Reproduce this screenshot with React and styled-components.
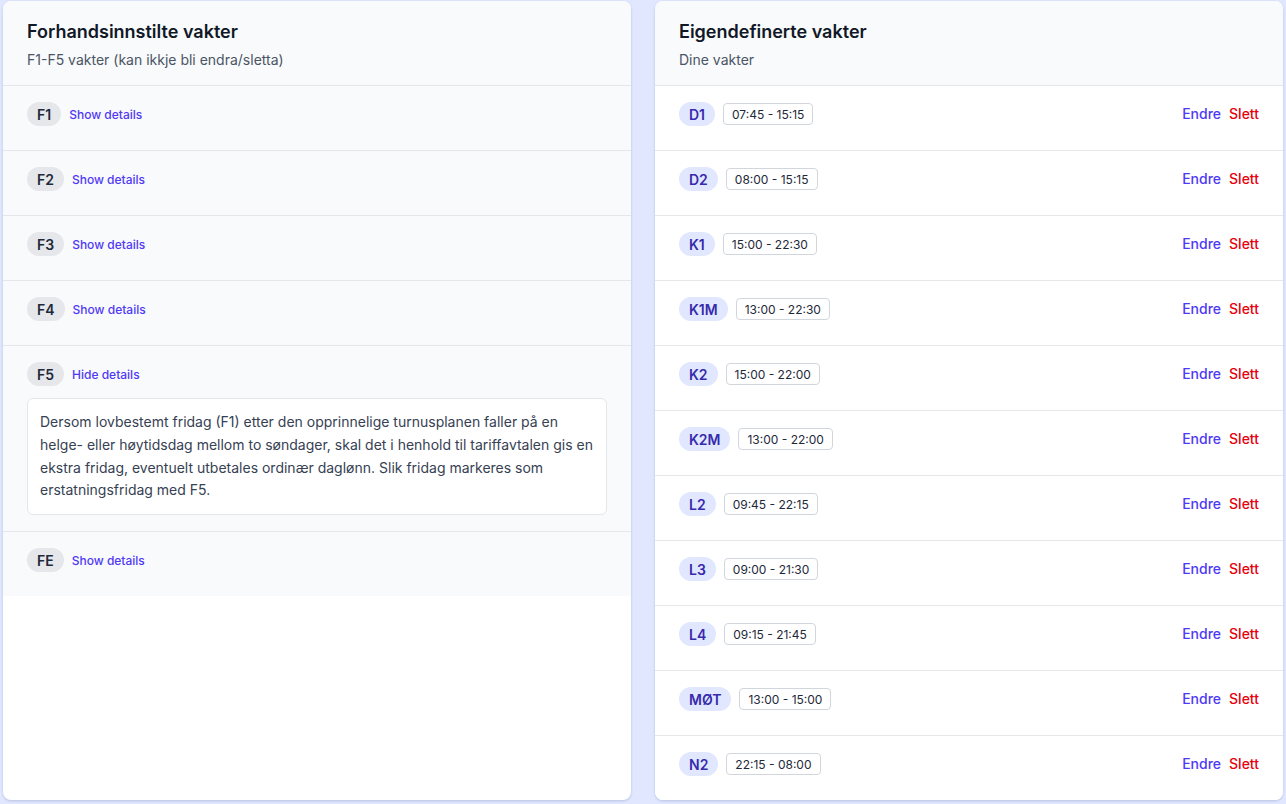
import React, { useState } from "react";
import styled, { createGlobalStyle } from "styled-components";

const Global = createGlobalStyle`
  html, body { margin: 0; padding: 0; background: #e0e7ff; }
  body { font-family: Inter, "Noto Sans", sans-serif; color: #111827; -webkit-font-smoothing: antialiased; }
  * { box-sizing: border-box; }
`;

const Page = styled.div`
  display: grid;
  grid-template-columns: 1fr 1fr;
  gap: 24px;
  padding: 1px 3px 4px;
  min-height: 804px;
  align-items: stretch;
`;

const Card = styled.section`
  background: #ffffff;
  border-radius: 8px;
  box-shadow: 0 1px 3px rgba(30, 41, 99, 0.12), 0 1px 2px rgba(30, 41, 99, 0.08);
  overflow: hidden;
  display: flex;
  flex-direction: column;
  height: 799px;
`;

const Header = styled.header`
  background: #f9fafb;
  padding: 17px 24px 15px;
  border-bottom: 1px solid #e5e7eb;
`;

const Title = styled.h2`
  margin: 0;
  font-size: 18px;
  line-height: 28px;
  font-weight: 600;
  color: #101828;
`;

const Subtitle = styled.p`
  margin: 4px 0 0;
  font-size: 14px;
  line-height: 20px;
  color: #4a5565;
`;

const List = styled.ul`
  list-style: none;
  margin: 0;
  padding: 0;
`;

const Row = styled.li`
  background: ${(p) => (p.$muted ? "#f9fafb" : "#ffffff")};
  padding: 16px 24px ${(p) => (p.$open ? "16px" : "24px")};
  border-bottom: 1px solid #e5e7eb;
  &:last-child { border-bottom: none; }
`;

const RowHead = styled.div`
  display: flex;
  align-items: center;
  justify-content: space-between;
  height: 24px;
`;

const Left = styled.div`
  display: flex;
  align-items: center;
  gap: 8px;
`;

const Badge = styled.span`
  display: inline-flex;
  align-items: center;
  height: 24px;
  padding: 0 10px;
  border-radius: 9999px;
  font-size: 14px;
  font-weight: 600;
  background: ${(p) => (p.$tone === "indigo" ? "#e0e7ff" : "#e5e7eb")};
  color: ${(p) => (p.$tone === "indigo" ? "#372aac" : "#1e2939")};
`;

const Time = styled.span`
  display: inline-flex;
  align-items: center;
  height: 22px;
  padding: 0 8px;
  border: 1px solid #d1d5dc;
  border-radius: 4px;
  font-size: 12px;
  color: #1e2939;
  background: #fff;
`;

const LinkButton = styled.button`
  border: 0;
  background: none;
  padding: 0;
  font-family: inherit;
  font-size: 12px;
  font-weight: 500;
  color: #4f39f6;
  cursor: pointer;
`;

const Actions = styled.div`
  display: flex;
  align-items: center;
  gap: 8px;
  margin-top: -1px;
`;

const Action = styled.button`
  border: 0;
  background: none;
  padding: 0;
  font-family: inherit;
  font-size: 14px;
  font-weight: 500;
  color: ${(p) => (p.$danger ? "#e7000b" : "#4f39f6")};
  cursor: pointer;
`;

const Details = styled.div`
  margin-top: 12px;
  background: #fff;
  border: 1px solid #e5e7eb;
  border-radius: 6px;
  padding: 12px;
  font-size: 14px;
  line-height: 22.75px;
  color: #364153;
`;

const presets = [
  { code: "F1" },
  { code: "F2" },
  { code: "F3" },
  { code: "F4" },
  {
    code: "F5",
    text:
      "Dersom lovbestemt fridag (F1) etter den opprinnelige turnusplanen faller på en helge- eller høytidsdag mellom to søndager, skal det i henhold til tariffavtalen gis en ekstra fridag, eventuelt utbetales ordinær daglønn. Slik fridag markeres som erstatningsfridag med F5.",
  },
  { code: "FE" },
];

const custom = [
  ["D1", "07:45 - 15:15"],
  ["D2", "08:00 - 15:15"],
  ["K1", "15:00 - 22:30"],
  ["K1M", "13:00 - 22:30"],
  ["K2", "15:00 - 22:00"],
  ["K2M", "13:00 - 22:00"],
  ["L2", "09:45 - 22:15"],
  ["L3", "09:00 - 21:30"],
  ["L4", "09:15 - 21:45"],
  ["MØT", "13:00 - 15:00"],
  ["N2", "22:15 - 08:00"],
];

export default function App() {
  const [open, setOpen] = useState("F5");
  return (
    <>
      <Global />
      <Page>
        <Card>
          <Header>
            <Title>Forhandsinnstilte vakter</Title>
            <Subtitle>F1-F5 vakter (kan ikkje bli endra/sletta)</Subtitle>
          </Header>
          <List>
            {presets.map((p) => {
              const isOpen = open === p.code;
              return (
                <Row key={p.code} $muted $open={isOpen}>
                  <RowHead>
                    <Left>
                      <Badge>{p.code}</Badge>
                      <LinkButton onClick={() => setOpen(isOpen ? null : p.code)}>
                        {isOpen ? "Hide details" : "Show details"}
                      </LinkButton>
                    </Left>
                  </RowHead>
                  {isOpen && p.text && <Details>{p.text}</Details>}
                </Row>
              );
            })}
          </List>
        </Card>
        <Card>
          <Header>
            <Title>Eigendefinerte vakter</Title>
            <Subtitle>Dine vakter</Subtitle>
          </Header>
          <List>
            {custom.map(([code, time]) => (
              <Row key={code}>
                <RowHead>
                  <Left>
                    <Badge $tone="indigo">{code}</Badge>
                    <Time>{time}</Time>
                  </Left>
                  <Actions>
                    <Action>Endre</Action>
                    <Action $danger>Slett</Action>
                  </Actions>
                </RowHead>
              </Row>
            ))}
          </List>
        </Card>
      </Page>
    </>
  );
}
